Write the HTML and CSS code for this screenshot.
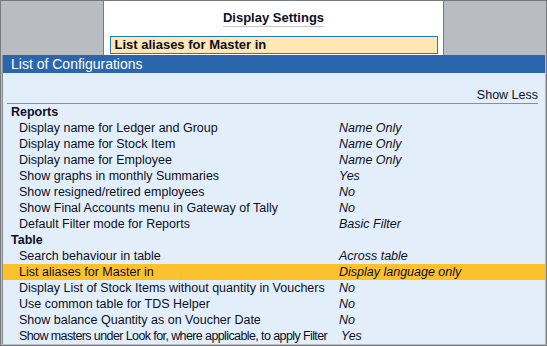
FILE: index.html
```html
<!DOCTYPE html>
<html lang="en">
<head>
    <meta charset="UTF-8">
    <title>Display Settings</title>
    <link rel="stylesheet" href="styles.css">
</head>
<body>

<div class="window">
    <!-- Top heading panel -->
    <div class="top">
        <div class="title-panel">
            <div class="title">Display Settings</div>
            <div class="field">List aliases for Master in</div>
        </div>
    </div>

    <!-- Main list -->
    <div class="main">
        <div class="bar">List of Configurations</div>
        <div class="show-less"><span>Show Less</span></div>

        <div class="list">
            <div class="group">Reports</div>
            <div class="row"><span>Display name for Ledger and Group</span><em>Name Only</em></div>
            <div class="row"><span>Display name for Stock Item</span><em>Name Only</em></div>
            <div class="row"><span>Display name for Employee</span><em>Name Only</em></div>
            <div class="row"><span>Show graphs in monthly Summaries</span><em>Yes</em></div>
            <div class="row"><span>Show resigned/retired employees</span><em>No</em></div>
            <div class="row"><span>Show Final Accounts menu in Gateway of Tally</span><em>No</em></div>
            <div class="row"><span>Default Filter mode for Reports</span><em>Basic Filter</em></div>

            <div class="group">Table</div>
            <div class="row"><span>Search behaviour in table</span><em>Across table</em></div>
            <div class="row selected"><span>List aliases for Master in</span><em>Display language only</em></div>
            <div class="row"><span>Display List of Stock Items without quantity in Vouchers</span><em>No</em></div>
            <div class="row"><span>Use common table for TDS Helper</span><em>No</em></div>
            <div class="row"><span>Show balance Quantity as on Voucher Date</span><em>No</em></div>
            <div class="row"><span class="tight">Show masters under Look for, where applicable, to apply Filter</span><em class="late">Yes</em></div>
        </div>
    </div>
</div>

</body>
</html>
```

FILE: styles.css
```css
/* Page */
body {
    margin: 0;
    font-family: "Liberation Sans", Arial, sans-serif;
    color: #0e0e24;
}

.window {
    width: 547px;
    height: 346px;
    box-sizing: border-box;
    border: 1px solid #777a7e;
    background-color: #b9bcc0;
    display: flex;
    flex-direction: column;
}

/* Top heading */
.top {
    height: 54px;
    display: flex;
}

.title-panel {
    margin-left: 102px;
    width: 339px;
    background-color: #ffffff;
    border-left: 1px solid #77797c;
    border-right: 1px solid #77797c;
    display: flex;
    flex-direction: column;
    align-items: center;
}

.title {
    margin-top: 9px;
    font-size: 13px;
    font-weight: bold;
    line-height: 15px;
    padding-bottom: 1px;
    border-bottom: 1px solid #c8c8c8;
}

.field {
    margin-top: 9px;
    width: 328px;
    height: 18px;
    box-sizing: border-box;
    border: 1px solid #1e7ac4;
    background-color: #fee7b3;
    font-size: 13px;
    font-weight: bold;
    line-height: 16px;
    padding-left: 4px;
}

/* Main list area */
.main {
    flex: 1;
    margin: 0 1px 1px 1px;
    border-left: 1px solid #8a8c8f;
    background-color: #e2effa;
    display: flex;
    flex-direction: column;
}

.bar {
    height: 18px;
    background-color: #2b65ae;
    color: #ffffff;
    font-size: 14px;
    line-height: 18px;
    padding-left: 8px;
}

.show-less {
    margin: 0 7px 0 4px;
    height: 30px;
    border-bottom: 1px solid #8d8d8d;
    display: flex;
    align-items: flex-end;
    justify-content: flex-end;
    font-size: 12.5px;
    line-height: 16px;
}

.group {
    height: 16px;
    line-height: 17px;
    font-size: 12.5px;
    font-weight: bold;
    padding-left: 8px;
}

.row {
    height: 16px;
    line-height: 17px;
    font-size: 12.5px;
    display: flex;
    padding-left: 16px;
}

.row span {
    width: 320px;
    white-space: nowrap;
}

.row em {
    font-style: italic;
}

.row .tight {
    letter-spacing: -0.6px;
}

.row .late {
    margin-left: 2px;
}

.row.selected {
    background-color: #fcc22e;
}
```
